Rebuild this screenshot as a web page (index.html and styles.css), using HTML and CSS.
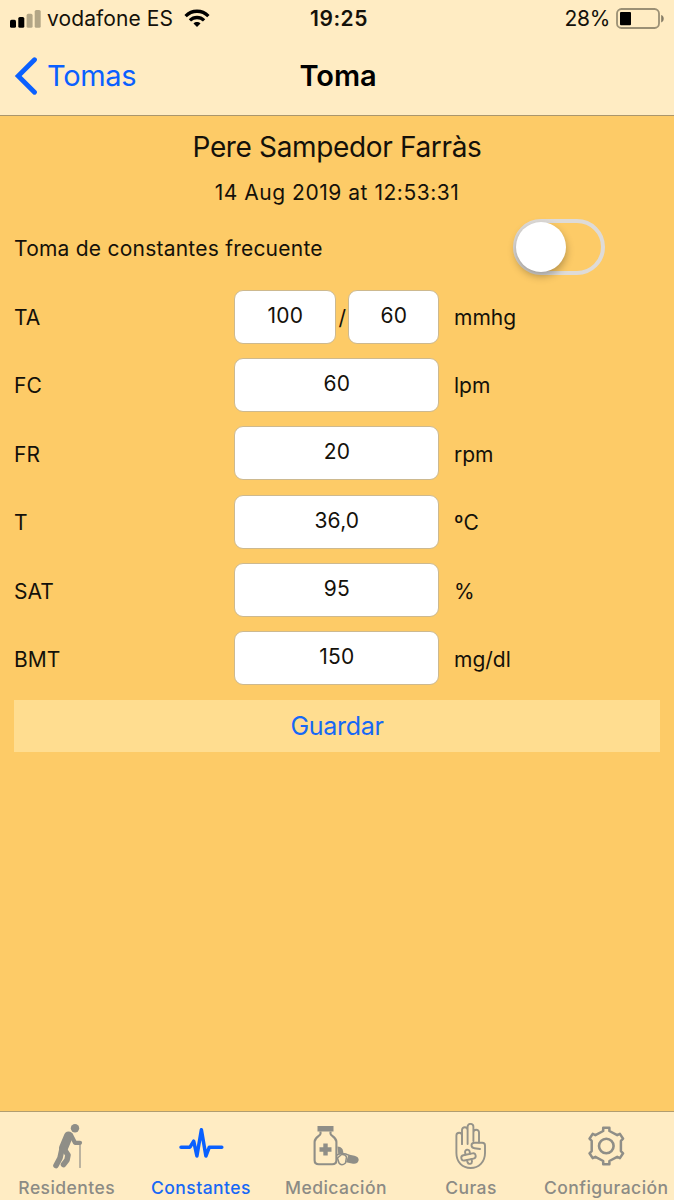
FILE: index.html
```html
<!DOCTYPE html>
<html lang="es">
<head>
<meta charset="utf-8">
<title>Toma</title>
<link rel="stylesheet" href="styles.css">
</head>
<body>
<div class="screen">
  <header class="top">
    <div class="status">
      <div class="status-left">
        <svg class="signal" width="31" height="18" viewBox="0 0 31 18"><rect x="0" y="9.8" width="6" height="8" rx="1.6"/><rect x="8.3" y="7" width="6" height="10.8" rx="1.6"/><g fill="#b3a686"><rect x="16.6" y="3.8" width="6" height="14" rx="1.6"/><rect x="24.7" y="0" width="6" height="17.8" rx="1.6"/></g></svg>
        <span class="carrier">vodafone ES</span>
        <svg class="wifi" width="26" height="19" viewBox="0 0 26 19" fill="none" stroke="#000" stroke-width="3.3"><path d="M1.6 7.1C8 .6 18 .6 24.4 7.1"/><path d="M5.9 11.4C10 7.5 16 7.5 20.1 11.4"/><path d="M13 18L9.5 14.5C11.5 12.6 14.5 12.6 16.5 14.5Z" fill="#000" stroke="none"/></svg>
      </div>
      <span class="clock">19:25</span>
      <div class="status-right">
        <span class="percent">28%</span>
        <svg class="battery" width="49" height="22" viewBox="0 0 49 22"><rect x="1" y="1" width="42" height="19" rx="4.5" fill="none" stroke="#9b9075" stroke-width="1.8"/><rect x="4" y="4" width="11" height="13.3" rx="1"/><path d="M45.2 7c3.4 1.1 3.4 6.3 0 7.4z" fill="#857c66"/></svg>
      </div>
    </div>
    <nav class="navbar">
      <a class="back"><svg width="24" height="38" viewBox="0 0 24 38" fill="none" stroke="#0a60ff" stroke-width="4.8" stroke-linecap="round" stroke-linejoin="miter"><path d="M20.5 2.8L4.2 19L20.5 35.2"/></svg><span>Tomas</span></a>
      <h1 class="title">Toma</h1>
      <span></span>
    </nav>
  </header>

  <main class="content">
    <h2 class="name"><span>Pere Sampedor Farràs</span></h2>
    <p class="date"><span>14 Aug 2019 at 12:53:31</span></p>
    <div class="frequent"><span class="flabel">Toma de constantes frecuente</span><div class="switch"><div class="knob"></div></div></div>
    <div class="rows">
      <div class="row"><span>TA</span><div class="pair"><div class="field sys">100</div><span class="slash">/</span><div class="field dia">60</div></div><span>mmhg</span></div>
      <div class="row"><span>FC</span><div class="field">60</div><span>lpm</span></div>
      <div class="row"><span>FR</span><div class="field">20</div><span>rpm</span></div>
      <div class="row"><span>T</span><div class="field">36,0</div><span>ºC</span></div>
      <div class="row"><span>SAT</span><div class="field">95</div><span>%</span></div>
      <div class="row"><span>BMT</span><div class="field">150</div><span>mg/dl</span></div>
    </div>
    <div class="save"><span>Guardar</span></div>
  </main>

  <footer class="tabs">
    <a class="tab"><svg width="46" height="46" viewBox="0 0 46 46" fill="none" stroke="#8f8e87" stroke-linecap="round" stroke-linejoin="round"><circle cx="31" cy="5.2" r="4.2" fill="#8f8e87" stroke="none"/><path d="M24.5 13L19.500 25" stroke-width="9"/><path d="M27 12l4 7.8h5" stroke-width="4.2"/><path d="M18 26l-2 9-4 7.5" stroke-width="5.6"/><path d="M20 26l4 6-1 5-3.5 4.5" stroke-width="5.600"/><path d="M36 20v24.5" stroke-width="1.200"/></svg><span>Residentes</span></a>
    <a class="tab active"><svg width="46" height="46" viewBox="0 0 46 46" fill="none" stroke="#0a60ff" stroke-width="3.5" stroke-linecap="round" stroke-linejoin="round"><path d="M3 24.200h9l3.700-6 3.200 14.800 4.500-26.300 4.500 26.300 3.400-8.800h12.500"/></svg><span>Constantes</span></a>
    <a class="tab"><svg width="46" height="46" viewBox="1 0 46 46" fill="none" stroke="#8f8e87" stroke-width="2.100" stroke-linejoin="round"><path d="M5.500 3h16v5.500h-16z" fill="#8f8e87" stroke="none"/><path d="M8.500 8.500v2.300c0 2-5.900 3.500-5.900 8v18.400q0 4.100 4.200 4.100h13.400q4.200 0 4.200-4.100V18.800c0-4.500-5.900-6-5.900-8V8.500"/><path d="M13.500 20.500v12M7.500 26.500h12" stroke-width="4.400"/><path d="M25.500 23.500c4 0 6 3 5.800 7l-5 1z" fill="#8f8e87" stroke="none"/><path d="M36.500 31.500l6 1.200q5 1.500 4 5t-5.500 3l-7-1.500z" fill="#8f8e87" stroke="none"/><path d="M25.500 35l4-3.500q4-.5 5 2.500l-1 6q-4 3.500-6.500 0z" stroke-width="1.500"/><path d="M25 32q6-3 12 .3" stroke-width="1.500"/></svg><span>Medicación</span></a>
    <a class="tab"><svg width="46" height="46" viewBox="0 0 46 46" fill="none" stroke="#969389" stroke-width="1.900" stroke-linecap="round" stroke-linejoin="round"><path d="M8.400 23V12.500a2.800 2.800 0 0 1 5.600 0V21M8.400 20V30c0 9 6 15 14.200 15S37 39 37 30v-7.500c0-1.600-1-2.700-2.700-2.700H26.500c-4 0-4 5 0 5.400l5.500.8"/><path d="M14 21V7a2.800 2.800 0 0 1 5.600 0v14M19.600 20V3.800a2.900 2.900 0 0 1 5.800 0V18M25.400 18V9.500a2.800 2.800 0 0 1 5.600 0v10"/><rect x="13.200" y="31.200" width="14.600" height="5.400" rx="2.700" transform="rotate(-12 20.500 34)"/><path d="M17.500 31.500l-.4-2a2.300 2.300 0 0 1 4.500-1l.4 2.200M19 37.200l.6 2.300a2.300 2.300 0 0 0 4.400-1l-.5-2.500"/></svg><span>Curas</span></a>
    <a class="tab"><svg width="46" height="46" viewBox="0 0 46 46" fill="none" stroke="#8f8e87" stroke-width="2.500" stroke-linejoin="round"><path d="M20.200 4.800h6.200v3.200l7.800 4.200 2.700-1.300 3.200 4.800-2.200 2.200v10.200l2.200 2.200-3.200 4.800-2.700-1.300-7.800 4.200v3.200h-6.200v-3.200l-7.800-4.200-2.700 1.300-3.200-4.800 2.200-2.200V17.900l-2.200-2.200 3.200-4.800 2.700 1.300 7.800-4.200z"/><circle cx="23.300" cy="23" r="7.300" stroke-width="2.600"/></svg><span>Configuración</span></a>
  </footer>
</div>
</body>
</html>
```
FILE: styles.css
```css
* { box-sizing: border-box; }
body { margin: 0; font-family: Inter, "Liberation Sans", sans-serif; color: #14110a; }
h1, h2, p { margin: 0; font-weight: 400; }
svg { display: block; flex: none; }
span { white-space: nowrap; }
.screen { width: 674px; height: 1200px; background: #fdcb67; display: flex; flex-direction: column; }
.top { height: 116px; background: #ffecc3; border-bottom: 1px solid #aa966c; }
.status, .navbar { display: grid; grid-template-columns: 1fr auto 1fr; align-items: center; }
.status { height: 37px; padding: 0 9px 0 10px; font-size: 21px; }
.status-left, .status-right { display: flex; align-items: center; }
.status-right { justify-content: flex-end; gap: 6px; }
.carrier { margin-left: 6px; letter-spacing: 0.1px; }
.wifi { margin-left: 11px; margin-bottom: 1px; }
.percent { letter-spacing: -0.3px; }
.clock { font-weight: 600; letter-spacing: 0.5px; padding-left: 3px; }
.navbar { height: 77px; padding: 0 12px 0 14px; }
.back { display: flex; align-items: center; color: #0a60ff; font-size: 29px; letter-spacing: -0.3px; gap: 9px; }
.title { font-size: 29px; font-weight: 600; letter-spacing: -0.1px; color: #000; }
.content { flex: 1; padding: 14px 14px 0; font-size: 21px; }
.name { font-size: 28px; line-height: 34px; letter-spacing: -0.35px; text-align: center; }
.date { margin-top: 16px; line-height: 26px; letter-spacing: 0.53px; text-align: center; }
.frequent { height: 56px; margin-top: 13px; display: flex; justify-content: space-between; align-items: center; padding-right: 55px; }
.flabel { letter-spacing: 0.23px; padding-top: 2px; }
.switch { width: 92px; height: 56px; border: 4px solid #dedbd8; border-radius: 28px; }
.knob { width: 50px; height: 50px; margin: -1px; border-radius: 50%; background: #fff; box-shadow: 0 4px 8px rgba(0,0,0,.3); }
.rows { margin-top: 14.6px; display: grid; gap: 14.38px; }
.row { height: 54px; display: grid; grid-template-columns: 220.4px 205px auto; align-items: center; }
.row > span { padding-top: 2px; }
.row > span:last-child { padding-left: 14.6px; }
.field { height: 54px; border: 1px solid #cdb98f; border-radius: 9px; background: #fff; line-height: 50px; text-align: center; letter-spacing: .2px; }
.pair { display: flex; align-items: center; justify-content: space-between; }
.slash { padding-top: 2px; }
.sys { width: 102px; }
.dia { width: 91px; }
.save { margin-top: 14.5px; height: 52px; background: #ffdd90; color: #1768f5; font-size: 25px; letter-spacing: -0.3px; line-height: 53px; text-align: center; }
.tabs { height: 89px; border-top: 1px solid #b19d70; background: #ffecc3; display: grid; grid-template-columns: 133.5px 135px 135px 135px 135.500px; color: #8c8b85; font-size: 17.5px; font-weight: 500; letter-spacing: 0.45px; }
.tab { display: flex; flex-direction: column; align-items: center; padding-top: 11px; }
.tab span { line-height: 22px; margin-top: 8px; }
.active { color: #1768f5; }
```
